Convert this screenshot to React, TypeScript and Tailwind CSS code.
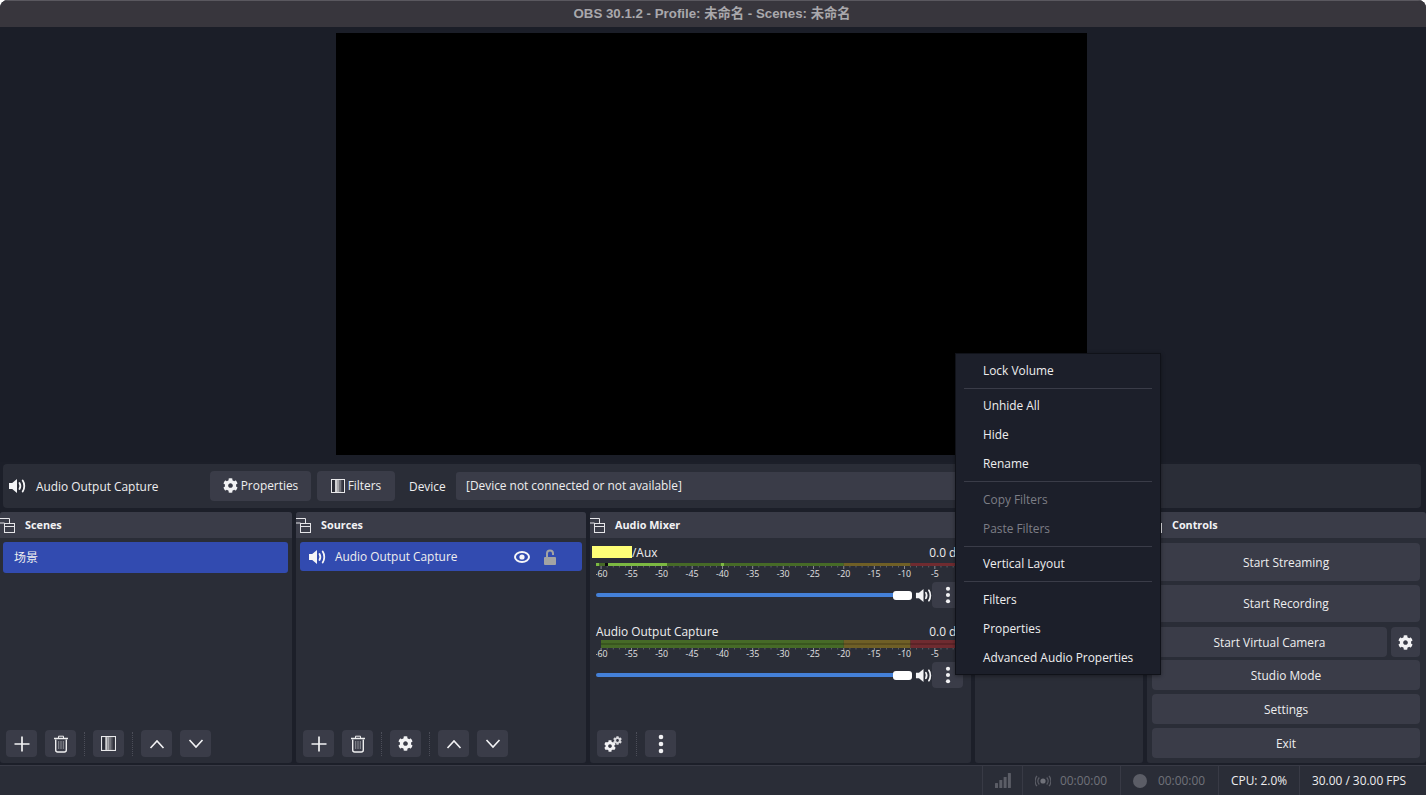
import React from 'react';
import { FaCog } from 'react-icons/fa';

const uiFont = { fontFamily: '"Open Sans", "Noto Sans CJK SC", sans-serif' };

function DockIcon() {
  return (
    <svg width="15" height="15" viewBox="0 0 15 15" fill="none" stroke="#e4e4e8" strokeWidth="1">
      <path d="M0 .5h9.500v5" />
      <path d="M0 5h4.500" />
      <rect x="4.500" y="5.500" width="10" height="9" />
      <path d="M4.500 8.500h10" />
    </svg>
  );
}

function Speaker({ size = 18 }: { size?: number }) {
  return (
    <svg width={size} height={size} viewBox="0 0 18 18" fill="none">
      <path d="M1 6h3.200L9 2v14l-4.800-4H1z" fill="#f4f4f6" />
      <path d="M11.500 6c1.100 1.900 1.100 4.100 0 6" stroke="#f4f4f6" strokeWidth="1.800" strokeLinecap="round" />
      <path d="M14.700 3.500c2.100 3.100 2.100 7.900 0 11" stroke="#f4f4f6" strokeWidth="1.800" strokeLinecap="round" />
    </svg>
  );
}

function Trash() {
  return (
    <svg width="16" height="18" viewBox="0 0 16 18" fill="none" stroke="#eeeeef">
      <path d="M1 3.500h14" strokeWidth="1.500" />
      <path d="M5.500 3V1.200h5V3" strokeWidth="1" />
      <path d="M2.700 4.500v10.500c0 1.200.8 2 2 2h6.600c1.200 0 2-.8 2-2V4.500" strokeWidth="1.400" />
      <path d="M5.700 6v8M8 6v8M10.300 6v8" strokeWidth=".8" stroke="#a5a6ac" />
    </svg>
  );
}

function FilterIcon({ size = 14 }: { size?: number }) {
  return (
    <svg width={size} height={size} viewBox="0 0 14 14">
      <rect x="1" y="1" width="12" height="12" fill="#2a2c36" />
      <rect x="4" y="1" width="2" height="12" fill="#d0d0d2" />
      <rect x="6" y="1" width="2" height="12" fill="#a8a8ac" />
      <rect x="8" y="1" width="2" height="12" fill="#74757c" />
      <rect x="10" y="1" width="1.500" height="12" fill="#474852" />
      <rect x=".5" y=".5" width="13" height="13" fill="none" stroke="#e8e8ea" />
    </svg>
  );
}

function Plus() {
  return (
    <svg width="16" height="16" viewBox="0 0 16 16" stroke="#f2f2f4" strokeWidth="1.700">
      <path d="M8 .5v15M.5 8h15" />
    </svg>
  );
}

function Chevron({ up }: { up?: boolean }) {
  return (
    <svg width="16" height="10" viewBox="0 0 16 10" fill="none" stroke="#f2f2f4" strokeWidth="1.600">
      <path d={up ? 'M1.500 9L8 2l6.500 7' : 'M1.500 1L8 8l6.500-7'} />
    </svg>
  );
}

function Dots({ size = 20 }: { size?: number }) {
  return (
    <svg width="6" height={size} viewBox="0 0 6 20" fill="#f2f2f4">
      <circle cx="3" cy="3" r="2.300" />
      <circle cx="3" cy="10" r="2.300" />
      <circle cx="3" cy="17" r="2.300" />
    </svg>
  );
}

function EyeIcon() {
  return (
    <svg width="16" height="12" viewBox="0 0 16 12">
      <ellipse cx="8" cy="6" rx="7" ry="5" fill="none" stroke="#f6f6f8" strokeWidth="2" />
      <circle cx="8" cy="6" r="2.600" fill="#f6f6f8" />
    </svg>
  );
}

function OpenLock() {
  return (
    <svg width="14" height="16" viewBox="0 0 14 16" fill="none">
      <path d="M4 8V4.500a3 3 0 0 1 6 0V6" stroke="#a3a3a3" strokeWidth="2" />
      <rect x="1" y="8" width="12" height="8" rx="1" fill="#a3a3a3" />
    </svg>
  );
}

function Gears() {
  return (
    <div className="relative w-[18px] h-[16px]">
      <FaCog className="absolute left-0 bottom-0 text-[#f2f2f4] text-[12px]" />
      <FaCog className="absolute right-0 top-0 text-[#d8d8dc] text-[9px]" />
    </div>
  );
}

function SignalBars() {
  return (
    <svg width="16" height="15" viewBox="0 0 16 15" fill="#5b5d66">
      <rect x="0" y="10" width="3" height="5" rx=".5" />
      <rect x="4.300" y="7" width="3" height="8" rx=".5" />
      <rect x="8.600" y="4" width="3" height="11" rx=".5" />
      <rect x="12.900" y="0" width="3" height="15" rx=".5" />
    </svg>
  );
}

function StreamDot() {
  return (
    <svg width="16" height="14" viewBox="0 0 16 14" fill="none" stroke="#5b5d66" strokeWidth="1.200">
      <circle cx="8" cy="7" r="2.600" fill="#70727a" stroke="none" />
      <path d="M4.300 3.500c-1.700 2-1.700 5 0 7M11.700 3.500c1.700 2 1.700 5 0 7" />
      <path d="M2 1.800c-2.500 3-2.500 7.400 0 10.400M14 1.800c2.500 3 2.500 7.400 0 10.400" />
    </svg>
  );
}

function ToolButton({ children }: { children: React.ReactNode }) {
  return (
    <div className="w-[31px] h-[27px] rounded-[4px] bg-[#3a3c48] flex items-center justify-center shrink-0">
      {children}
    </div>
  );
}

function Divider() {
  return <div className="w-0 h-[24px] mx-[8px] border-l border-dotted border-[#4b4d58] shrink-0" />;
}

function Dock({
  title,
  className,
  children,
  footer,
  hideIcon,
}: {
  title: string;
  className: string;
  children?: React.ReactNode;
  footer?: React.ReactNode;
  hideIcon?: boolean;
}) {
  return (
    <section className={`flex flex-col bg-[#2a2d37] rounded-[3px] overflow-hidden ${className}`}>
      <header className="h-[26px] bg-[#3a3c48] flex items-center shrink-0">
        <div className="w-[25px] shrink-0">{!hideIcon && <DockIcon />}</div>
        <span className="text-[10.800px] font-bold text-[#f2f2f4] pt-[1px]">{title}</span>
      </header>
      <div className="flex-1 min-h-0">{children}</div>
      {footer && <div className="h-[33px] pb-[6px] flex items-center shrink-0">{footer}</div>}
    </section>
  );
}

// meter drawing, x=0 sits at page x 596
function Meter({ stereo, live }: { stereo?: boolean; live?: boolean }) {
  const left = (db: number) => 5 + (db + 60) * 6.07;
  const top = stereo ? 1 : 3;
  const height = stereo ? 8 : 3;
  const labelY = stereo ? 18 : 16.500;
  const tickY = top + height + 1;
  const ticks: number[] = [];
  for (let db = -60; db <= 0; db++) ticks.push(db);
  const labels = [-60, -55, -50, -45, -40, -35, -30, -25, -20, -15, -10, -5];

  return (
    <svg width="376" height="20" viewBox="0 0 376 20" className="block shrink-0">
      <rect x={left(-60)} y={top} width={left(-20) - left(-60)} height={height} fill="#466a27" />
      <rect x={left(-20)} y={top} width={left(-9) - left(-20)} height={height} fill="#6f5f26" />
      <rect x={left(-9)} y={top} width={376 - left(-9)} height={height} fill="#6f2b30" />
      {stereo && <rect x={left(-60)} y={top + 3} width={371} height={2} fill="#000" opacity=".18" />}
      {live && (
        <>
          <rect x="0" y={top} width="3" height={height} fill="#7cb842" />
          <rect x="3" y={top} width="2" height={height} fill="#466a27" />
          <rect x="9" y={top} width="3" height={height} fill="#0b0b0b" />
          <rect x="12" y={top} width="59" height={height} fill="#7cb842" />
          <rect x="125" y={top} width="3" height={height} fill="#7cb842" />
        </>
      )}
      {ticks.map((db) => (
        <rect
          key={db}
          x={left(db) - 0.25}
          y={tickY - 1}
          width=".6"
          height={db % 5 === 0 ? 3 : 1.500}
          fill={db % 5 === 0 ? '#c9c9cd' : '#7d7f86'}
        />
      ))}
      {labels.map((db) => (
        <text
          key={db}
          x={left(db)}
          y={labelY}
          textAnchor="middle"
          fontSize="8.800"
          fill="#e2e2e4"
          style={uiFont}
        >
          {db}
        </text>
      ))}
    </svg>
  );
}

function MixerChannel({
  label,
  stereo,
  live,
  className,
}: {
  label: React.ReactNode;
  stereo?: boolean;
  live?: boolean;
  className?: string;
}) {
  return (
    <div className={className}>
      <div className="h-[16px] flex items-center justify-between pl-[6px] w-[381px]">
        <div className="text-[11.900px] text-[#eeeeef] flex items-center pt-[1px]">{label}</div>
        <span className="text-[11.900px] text-[#eeeeef] whitespace-nowrap pr-[7px] pt-[1px]">0.0 dB</span>
      </div>
      <div className="pl-[6px]">
        <Meter stereo={stereo} live={live} />
      </div>
      <div className={`flex items-center pl-[6px] h-[26px] ${stereo ? 'mt-[3px]' : 'mt-[2px]'}`}>
        <div className="relative w-[316px] h-[10px] shrink-0 flex items-center">
          <div className="w-[300px] h-[4px] rounded-full bg-[#4480d8]" />
          <div className="absolute right-0 top-[0.500px] w-[19px] h-[9px] rounded-[3px] bg-white" />
        </div>
        <div className="ml-[3px] w-[17px] flex items-center shrink-0">
          <Speaker size={17} />
        </div>
        <div className="w-[31px] h-[26px] rounded-[4px] bg-[#3a3c48] flex items-center justify-center shrink-0">
          <Dots size={18} />
        </div>
      </div>
    </div>
  );
}

function ControlButton({ children, className }: { children: React.ReactNode; className: string }) {
  return (
    <div
      className={`rounded-[4px] bg-[#3a3c48] flex items-center justify-center text-[11.900px] text-[#eeeeef] pt-[1px] ${className}`}
    >
      {children}
    </div>
  );
}

function MenuItem({ children, disabled }: { children: string; disabled?: boolean }) {
  return (
    <div
      className={`h-[29px] pl-[27px] flex items-center text-[11.900px] ${disabled ? 'text-[#7c7e86]' : 'text-[#eeeeef]'}`}
    >
      {children}
    </div>
  );
}

function MenuSeparator() {
  return (
    <div className="h-[6.500px] px-[8px] flex items-center">
      <div className="h-px w-full bg-[#3a3c48]" />
    </div>
  );
}

function StatusCell({ children, className }: { children: React.ReactNode; className: string }) {
  return (
    <div className={`h-full flex items-center border-l border-[#383a45] shrink-0 ${className}`}>{children}</div>
  );
}

export default function App() {
  return (
    <div
      style={uiFont}
      className="relative w-[1426px] h-[795px] overflow-hidden bg-[#1c1f29] flex flex-col rounded-t-[8px]"
    >
      <div className="h-[27px] bg-[#38363d] border-t border-[#5a585f] flex items-center justify-center shrink-0">
        <span
          style={{ fontFamily: '"Liberation Sans", "Noto Sans CJK SC", sans-serif' }}
          className="text-[13.300px] font-bold text-[#a9a8ac] -mt-[1px] -ml-[2px]"
        >
          OBS 30.1.2 - Profile: 未命名 - Scenes: 未命名
        </span>
      </div>

      <div className="h-[435px] bg-[#1b1e28] pt-[6px] pr-[3px] flex justify-center shrink-0">
        <div className="w-[751px] h-[422px] bg-black" />
      </div>

      <div className="mx-[3px] mt-[2px] w-[1418px] h-[44px] bg-[#2a2d37] rounded-[4px] flex items-center pb-[1px] text-[11.900px] text-[#eeeeef] shrink-0">
        <div className="ml-[5px] w-[28px] shrink-0">
          <Speaker size={18} />
        </div>
        <span className="w-[174px] pt-[2px] shrink-0">Audio Output Capture</span>
        <div className="w-[101px] h-[30px] rounded-[4px] bg-[#3a3c48] flex items-center justify-center gap-[3px] shrink-0">
          <FaCog className="text-[15px] text-[#f2f2f4]" />
          <span className="pt-[1px]">Properties</span>
        </div>
        <div className="ml-[6px] w-[78px] h-[30px] rounded-[4px] bg-[#3a3c48] flex items-center justify-center gap-[3px] shrink-0">
          <FilterIcon />
          <span className="pt-[1px]">Filters</span>
        </div>
        <span className="ml-[14px] w-[47px] pt-[2px] shrink-0">Device</span>
        <div className="w-[600px] h-[28px] rounded-[3px] bg-[#3a3c48] pl-[10px] pt-[1px] flex items-center shrink-0">
          [Device not connected or not available]
        </div>
      </div>

      <div className="mt-[4px] h-[251px] flex gap-[4px] shrink-0">
        <Dock
          title="Scenes"
          className="w-[292px]"
          footer={
            <div className="flex items-center pl-[6px]">
              <ToolButton><Plus /></ToolButton>
              <div className="w-[8px]" />
              <ToolButton><Trash /></ToolButton>
              <Divider />
              <ToolButton><FilterIcon size={15} /></ToolButton>
              <Divider />
              <ToolButton><Chevron up /></ToolButton>
              <div className="w-[8px]" />
              <ToolButton><Chevron /></ToolButton>
            </div>
          }
        >
          <div className="mt-[4px] ml-[3px] mr-[4px] h-[31px] rounded-[3px] bg-[#324bb0] pl-[11px] flex items-center text-[12px] text-[#eeeeef]">
            场景
          </div>
        </Dock>

        <Dock
          title="Sources"
          className="w-[290px]"
          footer={
            <div className="flex items-center pl-[7px]">
              <ToolButton><Plus /></ToolButton>
              <div className="w-[8px]" />
              <ToolButton><Trash /></ToolButton>
              <Divider />
              <ToolButton><FaCog className="text-[15px] text-[#f2f2f4]" /></ToolButton>
              <Divider />
              <ToolButton><Chevron up /></ToolButton>
              <div className="w-[8px]" />
              <ToolButton><Chevron /></ToolButton>
            </div>
          }
        >
          <div className="mt-[4px] ml-[4px] mr-[4px] h-[29px] rounded-[3px] bg-[#324bb0] pl-[8px] pr-[25px] flex items-center text-[11.900px] text-[#eeeeef]">
            <div className="w-[27px] shrink-0"><Speaker size={18} /></div>
            <span className="flex-1 pt-[1px]">Audio Output Capture</span>
            <div className="mr-[13px] flex"><EyeIcon /></div>
            <OpenLock />
          </div>
        </Dock>

        <Dock
          title="Audio Mixer"
          className="w-[381px]"
          footer={
            <div className="flex items-center pl-[7px]">
              <ToolButton><Gears /></ToolButton>
              <Divider />
              <ToolButton><Dots /></ToolButton>
            </div>
          }
        >
          <MixerChannel
            className="mt-[6px]"
            live
            label={
              <>
                <span className="w-[40px] h-[12px] -ml-[4px] -mt-[1px] bg-[#ffff77] inline-block" />
                /Aux
              </>
            }
          />
          <MixerChannel className="mt-[15px]" stereo label="Audio Output Capture" />
        </Dock>

        <Dock title="" hideIcon className="w-[168px]" />

        <Dock title="Controls" className="w-[279px]">
          <div className="pl-[5px] pr-[6px] pt-[5px] flex flex-col">
            <ControlButton className="h-[38px]">Start Streaming</ControlButton>
            <ControlButton className="h-[37px] mt-[4px]">Start Recording</ControlButton>
            <div className="flex mt-[5px] gap-[4px]">
              <ControlButton className="flex-1 h-[30px]">Start Virtual Camera</ControlButton>
              <ControlButton className="w-[29px] h-[30px]">
                <FaCog className="text-[15px] text-[#f2f2f4]" />
              </ControlButton>
            </div>
            <ControlButton className="h-[30px] mt-[3px]">Studio Mode</ControlButton>
            <ControlButton className="h-[30px] mt-[4px]">Settings</ControlButton>
            <ControlButton className="h-[30px] mt-[4px]">Exit</ControlButton>
          </div>
        </Dock>
      </div>

      <div className="mt-[2px] flex-1 bg-[#2a2d37] border-t border-[#383a45] flex justify-end text-[11.900px]">
        <StatusCell className="w-[40px] pl-[12px]"><SignalBars /></StatusCell>
        <StatusCell className="w-[98px] pl-[12px] gap-[9px] text-[#70727a]">
          <StreamDot />
          00:00:00
        </StatusCell>
        <StatusCell className="w-[98px] pl-[12px] gap-[11px] text-[#70727a]">
          <div className="w-[14px] h-[14px] rounded-full bg-[#5b5d66]" />
          00:00:00
        </StatusCell>
        <StatusCell className="w-[81px] pl-[12px] text-[#eeeeef]">CPU: 2.0%</StatusCell>
        <StatusCell className="w-[127px] pl-[12px] text-[#eeeeef]">30.00 / 30.00 FPS</StatusCell>
      </div>

      <div className="absolute left-[955px] top-[353px] w-[206px] h-[322px] bg-[#1c1f2a] border border-[#101219] py-[2px] shadow-[0_1px_4px_rgba(0,0,0,0.4)]">
        <MenuItem>Lock Volume</MenuItem>
        <MenuSeparator />
        <MenuItem>Unhide All</MenuItem>
        <MenuItem>Hide</MenuItem>
        <MenuItem>Rename</MenuItem>
        <MenuSeparator />
        <MenuItem disabled>Copy Filters</MenuItem>
        <MenuItem disabled>Paste Filters</MenuItem>
        <MenuSeparator />
        <MenuItem>Vertical Layout</MenuItem>
        <MenuSeparator />
        <MenuItem>Filters</MenuItem>
        <MenuItem>Properties</MenuItem>
        <MenuItem>Advanced Audio Properties</MenuItem>
      </div>
    </div>
  );
}
